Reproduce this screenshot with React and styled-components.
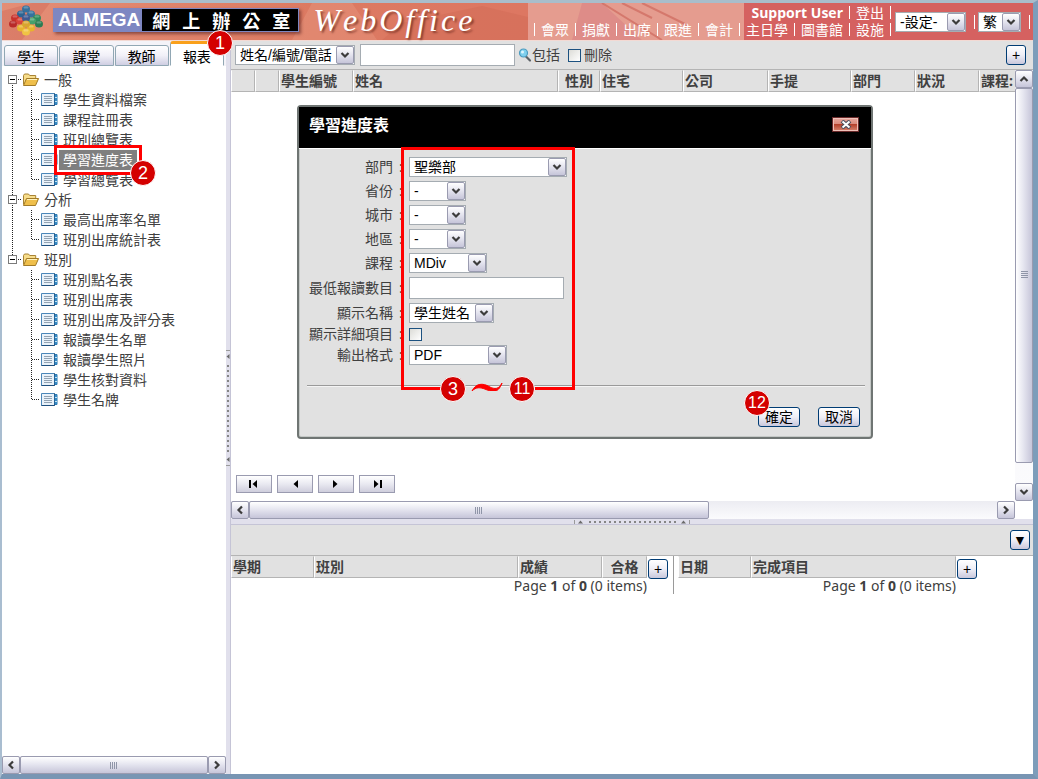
import React from "react"
import styled, { createGlobalStyle, css } from "styled-components"

const GlobalStyle = createGlobalStyle`
  * {
    box-sizing: border-box;
  }

  body {
    margin: 0;
    background: #fff;
    color: #404040;
    font-family: "Open Sans", "Noto Sans CJK TC", sans-serif;
    font-size: 14px;
    line-height: 20px;
  }

  button, select, input {
    font-family: "Liberation Sans", "Noto Sans CJK TC", sans-serif;
    font-size: 14px;
    color: #000;
  }

  ul {
    list-style: none;
    margin: 0;
    padding: 0;
  }
`

const Frame = styled.div`
  min-height: 100vh;
  display: flex;
  flex-direction: column;
  border-style: solid;
  border-width: 3px 5px 5px 2px;
  border-color: #a9bdcb #7d9dba #7895b3 #a9bdd0;
`

/* Shared controls */

const SelectShell = styled.span`
  display: inline-grid;
  width: ${p => p.$width}px;
  height: 20px;
  border: 1px solid #a5acb2;
  background: #fff;
`

const NativeSelect = styled.select`
  grid-area: 1 / 1;
  appearance: none;
  width: 100%;
  height: 18px;
  border: 0;
  background: transparent;
  padding: 0 18px 0 4px;
  line-height: 18px;
  outline: none;
`

const SelectArrow = styled.span`
  grid-area: 1 / 1;
  justify-self: end;
  display: grid;
  place-items: center;
  width: 18px;
  height: 18px;
  border: 1px solid #9a9bb0;
  border-radius: 2px;
  background: linear-gradient(#fff, #e6e6f0 45%, #c6c5d9);
  pointer-events: none;
`

const Chevron = ({ turn = 0 }) => (
  <svg width="10" height="10" viewBox="0 0 10 10" aria-hidden="true">
    <path
      d="M1.5 3 L5 6.5 L8.5 3"
      transform={`rotate(${turn} 5 5)`}
      fill="none"
      stroke="#3c3c3c"
      strokeWidth="2.2"
    />
  </svg>
)

const Select = ({ id, label, width, options }) => (
  <SelectShell $width={width}>
    <NativeSelect id={id} aria-label={label}>
      {options.map(option => (
        <option key={option}>{option}</option>
      ))}
    </NativeSelect>
    <SelectArrow>
      <Chevron />
    </SelectArrow>
  </SelectShell>
)

const TextInput = styled.input`
  width: 155px;
  height: 22px;
  border: 1px solid #a5acb2;
  background: #fff;
  padding: 0 4px;
`

const Checkbox = styled.input`
  appearance: none;
  width: 13px;
  height: 13px;
  margin: 0;
  border: 1px solid #1c5180;
  background: linear-gradient(135deg, #dcdcd7, #fff);
`

const XpButton = styled.button`
  flex: none;
  height: 20px;
  width: ${p => p.$width}px;
  padding: 0;
  border: 1px solid #003c74;
  border-radius: 3px;
  background: linear-gradient(#fff, #eeeef6 50%, #c9c8dc);
  line-height: 18px;
  text-align: center;
`

const Badge = styled.span`
  display: grid;
  place-items: center;
  width: 26px;
  height: 26px;
  border: 1px solid #fff;
  border-radius: 50%;
  background: #d40000;
  color: #fff;
  font-family: "Liberation Sans", sans-serif;
  font-size: ${p => (p.$wide ? 16 : 18)}px;
  line-height: 24px;
`

/* Header */

const Banner = styled.header`
  display: flex;
  align-items: center;
  height: 38px;
  position: relative;
  color: #fff;
  border-bottom: 1px solid #f3d9d3;
  background: linear-gradient(90deg, #e48e76, #dc7a62 30%, #dd7762 51%, #e59c8f 51%, #e59c8f 72%, #d56160 72%);
`

const BannerArt = styled.svg`
  position: absolute;
  inset: 0;
  width: 100%;
  height: 100%;
`

const Brand = styled.div`
  position: relative;
  display: flex;
  align-items: center;
  flex: 1;
  padding: 0 0 4px 6px;
`

const NamePlate = styled.div`
  display: flex;
  align-items: center;
  height: 24px;
  margin: 0 14px 0 9px;
  padding: 1px;
  background: #7e87c2;
  box-shadow: 2px 2px 3px rgba(80, 30, 30, 0.6);
  font-family: "Liberation Sans", sans-serif;
  font-size: 19px;
  font-weight: 700;
`

const PlateLatin = styled.span`
  padding: 0 2px 0 4px;
`

const PlateHan = styled.span`
  display: flex;
  gap: 12px;
  height: 22px;
  padding: 0 8px 0 10px;
  background: #000;
  font-family: "Noto Sans CJK TC", sans-serif;
  font-size: 18px;
  line-height: 22px;
`

const Wordmark = styled.span`
  display: flex;
  gap: 3px;
  font-family: "Liberation Serif", serif;
  font-size: 32px;
  font-style: italic;
  line-height: 34px;
  text-shadow: 2px 2px 2px rgba(90, 30, 20, 0.6);
`

const Menu = styled.nav`
  position: relative;
  display: flex;
  flex-direction: column;
  align-items: flex-end;
  padding-bottom: 2px;
`

const MenuRow = styled.div`
  display: flex;
  line-height: 17px;
`

const menuItem = css`
  display: flex;
  align-items: center;
  color: #fff;
  text-decoration: none;
  white-space: nowrap;

  &::after {
    content: "";
    width: 1px;
    height: 13px;
    margin: 0 6px;
    background: #fff;
  }

  &:last-child::after {
    margin-right: 4px;
  }
`

const MenuLink = styled.a`
  ${menuItem}

  ${p => p.$first && css`
    &::before {
      content: "";
      width: 1px;
      height: 13px;
      margin-right: 6px;
      background: #fff;
    }
  `}
`

const UserName = styled.strong`
  ${menuItem}
`

const Settings = styled.div`
  position: relative;
  display: flex;
  align-items: center;
`

const Divider = styled.span`
  width: 1px;
  height: 14px;
  margin: 0 3px 0 8px;
  background: #fff;
`

/* Sidebar */

const Body = styled.div`
  flex: 1;
  display: flex;
`

const Sidebar = styled.aside`
  flex: none;
  width: 224px;
  display: flex;
  flex-direction: column;
  background: #fff;
`

const Tabs = styled.div`
  display: flex;
  align-items: flex-end;
  gap: 1px;
  height: 25px;
  padding: 0 2px;
  background: #f4f3f8;
`

const Tab = styled.button`
  position: relative;
  flex: 1;
  height: ${p => (p.$active ? 25 : 21)}px;
  padding: 0;
  border: 1px solid #91a7b4;
  border-bottom-color: ${p => (p.$active ? "#fff" : "#91a7b4")};
  border-radius: 3px 3px 0 0;
  background: linear-gradient(#fff, #f1f0f8 50%, #cfcee2);
  line-height: 22px;

  ${p => p.$active && css`
    border-top: 3px solid #f9a01b;
    padding-top: 2px;
    background: #fff;
  `}
`

const TabBadge = styled(Badge)`
  position: absolute;
  top: -14px;
  right: -10px;
  z-index: 2;
`

const Tree = styled.ul`
  flex: 1;
  padding-top: 4px;
`

const TreeRow = styled.div`
  display: flex;
  align-items: center;
  height: 20px;
`

const TreeLabel = styled.a`
  position: relative;
  height: 20px;
  margin-left: ${p => (p.$group ? 0 : 1)}px;
  padding: 0 4px;
  color: #404040;
  line-height: 20px;
  text-decoration: none;

  ${p => p.$selected && css`
    background: #7f7f7f;
    color: #fff;
    outline: 3px solid #f00;
    outline-offset: 2px;
    z-index: 1;
  `}
`

const TreeBadge = styled(Badge)`
  position: absolute;
  left: 71px;
  top: 10px;
`

/* Scroll bars */

const Bar = styled.div`
  display: flex;
  flex-direction: ${p => (p.$vertical ? "column" : "row")};
  flex: none;
  ${p => (p.$vertical ? "width: 18px;" : "height: 18px;")}
  background: linear-gradient(#ececf2, #fbfbfd);
`

const ScrollButton = styled.button`
  display: grid;
  place-items: center;
  flex: none;
  width: 18px;
  height: 18px;
  padding: 0;
  border: 1px solid #9a9bb0;
  border-radius: 2px;
  background: linear-gradient(#fff, #e6e6f0 45%, #c6c5d9);
`

const Thumb = styled.div`
  display: grid;
  place-items: center;
  flex: ${p => p.$share} 1 0;
  border: 1px solid #9a9bb0;
  border-radius: 2px;
  background: linear-gradient(${p => (p.$vertical ? "90deg" : "180deg")}, #fff, #e6e6f0 45%, #c6c5d9);
`

const Track = styled.div`
  flex: ${p => p.$share} 1 0;
`

const Grip = ({ vertical }) => (
  <svg width="8" height="8" viewBox="0 0 8 8" aria-hidden="true">
    <path
      d={vertical ? "M1 .5h7M1 2.5h7M1 4.5h7M1 6.5h7" : "M.5 1v7M2.5 1v7M4.5 1v7M6.5 1v7"}
      stroke="#8f95a8"
    />
  </svg>
)

const ScrollBar = ({ vertical, thumb = 1, track = 0 }) => (
  <Bar $vertical={vertical}>
    <ScrollButton aria-label={vertical ? "向上捲動" : "向左捲動"}>
      <Chevron turn={vertical ? 180 : 90} />
    </ScrollButton>
    <Thumb $vertical={vertical} $share={thumb}>
      <Grip vertical={vertical} />
    </Thumb>
    {track > 0 && <Track $share={track} />}
    <ScrollButton aria-label={vertical ? "向下捲動" : "向右捲動"}>
      <Chevron turn={vertical ? 0 : 270} />
    </ScrollButton>
  </Bar>
)

const Splitter = styled.div`
  display: flex;
  align-items: center;
  justify-content: center;
  flex: none;
  overflow: hidden;
  background: #e1e0ec;
  border: 0 solid #c5c4d6;
  ${p => (p.$vertical ? "width: 5px; border-right-width: 1px;" : "height: 6px; border-bottom-width: 1px;")}
`

/* Main area */

const Main = styled.main`
  flex: 1;
  min-width: 0;
  display: flex;
  flex-direction: column;
`

const Toolbar = styled.div`
  display: flex;
  align-items: center;
  height: ${p => p.$height}px;
  padding: 0 ${p => p.$right}px 0 4px;
  background: #e1e1e1;
  border-bottom: 1px solid #b4b4b4;
`

const SearchInput = styled(TextInput)`
  margin: 0 3px 0 5px;
`

const CheckLabel = styled.label`
  display: flex;
  align-items: center;
  gap: 3px;
  margin-left: 8px;
`

const Push = styled.span`
  flex: 1;
`

const Pane = styled.div`
  display: flex;
`

const GridPane = styled.section`
  position: relative;
  flex: 1;
  min-width: 0;
  min-height: 431px;
  display: flex;
  flex-direction: column;
  justify-content: space-between;
`

const TableClip = styled.div`
  overflow: hidden;
`

const Table = styled.table`
  table-layout: fixed;
  width: ${p => p.$width}px;
  border-collapse: separate;
  border-spacing: 0;
`

const Th = styled.th`
  height: 22px;
  padding: 0 1px;
  border: 1px solid;
  border-color: #e1e1e1 #b4b4b4 #b4b4b4 #fff;
  background: #e1e1e1;
  font-weight: 700;
  line-height: 20px;
  text-align: ${p => p.$align || "left"};
  white-space: nowrap;
`

const Pager = styled.div`
  display: flex;
  gap: 5px;
  padding: 0 0 8px 5px;
`

const PagerButton = styled.button`
  display: grid;
  place-items: center;
  width: 36px;
  height: 18px;
  padding: 0;
  border: 1px solid #9a9bb0;
  background: linear-gradient(#fff, #e9e9f1 50%, #cfcedd);
`

const BarRow = styled.div`
  display: grid;
  grid-template-columns: 1fr 18px;
`

const Details = styled.section`
  display: flex;
  flex: 1;
  align-items: flex-start;
`

const DetailBlock = styled.div`
  display: flex;
  align-items: flex-start;
  gap: 1px;
  padding-right: 5px;
  margin-right: 4px;
  height: 38px;
  ${p => p.$ruled && "border-right: 1px solid #9a9a9a;"}
`

const AddButton = styled(XpButton)`
  margin-top: 3px;
`

const Summary = styled.p`
  margin: 0;
  font-size: 14px;
  font-family: "Noto Sans", sans-serif;
  line-height: 16px;
  text-align: right;
  white-space: nowrap;
`

/* Dialog */

const Dialog = styled.section`
  position: absolute;
  top: 35px;
  left: 66px;
  width: 576px;
  border: 2px solid #6f7573;
  border-radius: 4px;
  background: #e1e1e1;
  box-shadow: inset 0 0 0 1px #c4c8c6;
`

const DialogHead = styled.div`
  display: flex;
  align-items: center;
  justify-content: space-between;
  height: 42px;
  padding: 0 12px 6px 10px;
  border-bottom: 1px solid #fff;
  background: #000;
`

const DialogTitle = styled.h2`
  margin: 0;
  color: #fff;
  font-size: 16px;
  line-height: 24px;
`

const CloseButton = styled.button`
  display: grid;
  place-items: center;
  width: 27px;
  height: 15px;
  padding: 0;
  border: 1px solid #6a2a2a;
  background: linear-gradient(#e8a99f, #da8a7c 45%, #b5412c 50%, #d8846f);
  box-shadow: inset 0 0 0 1px #efc0b8;
`

const Fields = styled.div`
  position: relative;
  display: grid;
  grid-template-columns: 100px 1fr;
  column-gap: 10px;
  row-gap: 4px;
  align-items: center;
  padding: 8px 0 20px;
`

const FieldLabel = styled.label`
  display: flex;
  justify-content: flex-end;
  line-height: 14px;
  white-space: nowrap;

  &::after {
    content: ":";
    width: 0;
    padding-left: 6px;
  }
`

const FieldCell = styled.div`
  display: flex;
`

const Outline = styled.svg`
  position: absolute;
  left: 102px;
  top: -2px;
`

const Steps = styled.div`
  position: absolute;
  left: 141px;
  bottom: -17px;
  display: flex;
  gap: 43px;
`

const Rule = styled.hr`
  margin: 0 6px 0 8px;
  border: 0;
  border-top: 1px solid #9a9a9a;
  border-bottom: 1px solid #f4f4f4;
`

const DialogActions = styled.div`
  display: flex;
  justify-content: flex-end;
  gap: 18px;
  padding: 20px 11px 10px;
`

const Action = styled.span`
  position: relative;
  display: flex;
`

const ActionBadge = styled(Badge)`
  position: absolute;
  left: -14px;
  top: -17px;
`

/* Drawings */

const Logo = () => (
  <svg width="36" height="32" viewBox="0 0 36 32" aria-hidden="true">
    {[
      [18, 5, "#35719d"], [13, 10, "#2d6492"], [23, 10, "#35719d"],
      [7, 14, "#c8312c"], [12, 17, "#d7443a"], [5, 20, "#b82a28"],
      [29, 14, "#2f8a5b"], [24, 17, "#45a06c"], [31, 20, "#2a7c53"],
      [18, 14, "#3f5a92"], [13, 24, "#e8b32e"], [23, 24, "#e8b32e"],
      [18, 20, "#d9a52e"], [18, 28, "#f0c444"],
    ].map(([x, y, fill]) => (
      <g key={`${x}-${y}`}>
        <ellipse cx={x} cy={y} rx="4" ry="3.6" fill={fill} />
        <ellipse cx={x} cy={y - 1.6} rx="2.6" ry="1.2" fill="#fff" opacity="0.25" />
      </g>
    ))}
  </svg>
)

const Folder = () => (
  <svg width="18" height="16" viewBox="0 0 18 16" aria-hidden="true">
    <path d="M1.5 12.5V3.5l1-1.5h4l1.2 1.5h6v3" fill="#f7dd8b" stroke="#a88334" />
    <path d="M1.5 13.5L4.5 6.5H16.6L13.5 13.5Z" fill="#efbf4b" stroke="#a27b28" />
    <path d="M5 7.5h10" stroke="#fff2bd" />
  </svg>
)

const Report = () => (
  <svg width="17" height="16" viewBox="0 0 17 16" aria-hidden="true">
    <path d="M.5 1.5h13v12h-13z" fill="#e9f2fa" stroke="#4a86b8" />
    <path d="M.5 13.5h13v-12" fill="none" stroke="#1f4f7d" />
    <path d="M3 4.5h8M3 6.5h8M3 8.5h8M3 10.5h8" stroke="#93a3b3" />
    <path d="M14 2.5h2v10h-2z" fill="#3a9bd8" stroke="#2f78b0" />
    <path d="M14 5.5h2M14 9.5h2" stroke="#c2e2f5" />
  </svg>
)

const GroupLines = ({ first, last }) => (
  <svg width="20" height="20" viewBox="0 0 20 20" aria-hidden="true">
    <g stroke="#222" strokeDasharray="1 1">
      {!first && <path d="M10.5 0v5" />}
      {!last && <path d="M10.5 15v5" />}
      <path d="M16 9.5h4" />
    </g>
    <rect x="6.5" y="5.5" width="8" height="8" fill="#fff" stroke="#7b7b7b" />
    <path d="M8 9.5h5" stroke="#000" />
  </svg>
)

const LeafLines = ({ trunk, last }) => (
  <svg width="39" height="20" viewBox="0 0 39 20" aria-hidden="true">
    <g stroke="#222" strokeDasharray="1 1">
      {trunk && <path d="M10.5 0v20" />}
      <path d={last ? "M29.5 0v10" : "M29.5 0v20"} />
      <path d="M30 9.5h8" />
    </g>
  </svg>
)

const Magnifier = () => (
  <svg width="14" height="16" viewBox="0 0 14 16" aria-hidden="true">
    <path d="M8 9.5l4 4" stroke="#5d6267" strokeWidth="2.2" strokeLinecap="round" />
    <circle cx="5.5" cy="6" r="4" fill="#7fd0ee" stroke="#4d9cc0" strokeWidth="1.2" />
    <circle cx="4.5" cy="5" r="1.5" fill="#def5fd" />
  </svg>
)

const PagerIcon = ({ back, edge }) => (
  <svg width="12" height="10" viewBox="0 0 12 10" aria-hidden="true">
    <g transform={back ? undefined : "rotate(180 6 5)"}>
      <path d="M9 1v8L4.5 5z" fill="#000" />
      {edge && <path d="M2 1v8" stroke="#000" strokeWidth="2" />}
    </g>
  </svg>
)

const SideGrip = () => (
  <svg width="4" height="116" viewBox="0 0 4 116" aria-hidden="true">
    <path d="M0 .5h4M0 115.5h4" stroke="#9a9a9a" />
    <path d="M3.5 4v5L.5 6.5zM3.5 107v5l-3-2.5z" fill="#6b6b6b" />
    <path d="M2 15v88" stroke="#858585" strokeWidth="2" strokeDasharray="2 3" />
  </svg>
)

const BottomGrip = () => (
  <svg width="116" height="4" viewBox="0 0 116 4" aria-hidden="true">
    <path d="M.5 0v4M115.5 0v4" stroke="#9a9a9a" />
    <path d="M4 3.5h5L6.5 .5zM107 3.5h5l-2.5-3z" fill="#6b6b6b" />
    <path d="M15 2h88" stroke="#858585" strokeWidth="2" strokeDasharray="2 3" />
  </svg>
)

const groups = [
  { name: "一般", items: ["學生資料檔案", "課程註冊表", "班別總覽表", "學習進度表", "學習總覽表"] },
  { name: "分析", items: ["最高出席率名單", "班別出席統計表"] },
  {
    name: "班別",
    items: ["班別點名表", "班別出席表", "班別出席及評分表", "報讀學生名單", "報讀學生照片", "學生核對資料", "學生名牌"],
  },
]

const studentColumns = [
  ["", 24], ["", 24], ["學生編號", 74], ["姓名", 205], ["性別", 42, "center"], ["住宅", 83],
  ["公司", 85], ["手提", 83], ["部門", 64], ["狀況", 64], ["課程:", 84],
]

const termColumns = [["學期", 83], ["班別", 204], ["成績", 84], ["合格", 45, "center"]]
const progressColumns = [["日期", 73], ["完成項目", 205]]

const sum = columns => columns.reduce((total, column) => total + column[1], 0)

const HeaderTable = ({ columns }) => (
  <Table $width={sum(columns)}>
    <colgroup>
      {columns.map(([, width], i) => (
        <col key={i} width={width} />
      ))}
    </colgroup>
    <thead>
      <tr>
        {columns.map(([name, , align], i) => (
          <Th key={i} scope="col" $align={align}>{name}</Th>
        ))}
      </tr>
    </thead>
  </Table>
)

const Detail = ({ columns, ruled }) => (
  <DetailBlock $ruled={ruled}>
    <div>
      <HeaderTable columns={columns} />
      <Summary>
        Page <b>1</b> of <b>0</b> (0 items)
      </Summary>
    </div>
    <AddButton $width={20} aria-label="新增">+</AddButton>
  </DetailBlock>
)

const Field = ({ id, label, children }) => (
  <>
    <FieldLabel htmlFor={id}>{label}</FieldLabel>
    <FieldCell>{children}</FieldCell>
  </>
)

const ReportDialog = () => (
  <Dialog role="dialog" aria-labelledby="dialog-title">
    <DialogHead>
      <DialogTitle id="dialog-title">學習進度表</DialogTitle>
      <CloseButton aria-label="關閉">
        <svg width="12" height="9" viewBox="0 0 12 9" aria-hidden="true">
          <path d="M2 1L10 8M10 1L2 8" stroke="#4b4f5c" strokeWidth="4" />
          <path d="M2.5 1.5L9.5 7.5M9.5 1.5L2.5 7.5" stroke="#fff" strokeWidth="2" />
        </svg>
      </CloseButton>
    </DialogHead>
    <Fields>
      <Field id="department" label="部門">
        <Select id="department" width={158} options={["聖樂部"]} />
      </Field>
      <Field id="province" label="省份">
        <Select id="province" width={57} options={["-"]} />
      </Field>
      <Field id="city" label="城市">
        <Select id="city" width={57} options={["-"]} />
      </Field>
      <Field id="district" label="地區">
        <Select id="district" width={57} options={["-"]} />
      </Field>
      <Field id="course" label="課程">
        <Select id="course" width={78} options={["MDiv"]} />
      </Field>
      <Field id="minimum" label="最低報讀數目">
        <TextInput id="minimum" type="text" />
      </Field>
      <Field id="display-name" label="顯示名稱">
        <Select id="display-name" width={85} options={["學生姓名"]} />
      </Field>
      <Field id="show-details" label="顯示詳細項目">
        <Checkbox id="show-details" type="checkbox" />
      </Field>
      <Field id="format" label="輸出格式">
        <Select id="format" width={98} options={["PDF"]} />
      </Field>
      <Outline width="174" height="244" viewBox="0 0 174 244" aria-hidden="true">
        <path d="M42 241.5H1.5V1.5H172.5V241.5H134" fill="none" stroke="#f00" strokeWidth="3" />
        <path d="M71 244C75 236 82 236 88 239.5S98 242 101 236C97 247 91 245 85 242.5S75 240 71 244Z" fill="#f00" stroke="#f00" />
      </Outline>
      <Steps>
        <Badge>3</Badge>
        <Badge $wide>11</Badge>
      </Steps>
    </Fields>
    <Rule />
    <DialogActions>
      <Action>
        <XpButton $width={42}>確定</XpButton>
        <ActionBadge $wide>12</ActionBadge>
      </Action>
      <XpButton $width={42}>取消</XpButton>
    </DialogActions>
  </Dialog>
)

const Letters = ({ text }) => [...text].map((letter, i) => <span key={i}>{letter}</span>)

const App = () => (
  <Frame>
    <GlobalStyle />
    <Banner>
      <BannerArt viewBox="0 0 1031 37" preserveAspectRatio="xMinYMid slice" aria-hidden="true">
        <path d="M0 8L30 0H48L20 37H0z" fill="#c85a4d" opacity="0.3" />
        <path d="M400 20L480 3L526 14V37H380z" fill="#c95f4d" opacity="0.25" />
        <path d="M310 0H350L375 37H290z" fill="#f0a58f" opacity="0.3" />
        <path d="M580 0L600 0L640 37H570z" fill="#d47a80" opacity="0.45" />
        <path d="M640 0L685 22M600 0L660 37M620 0L650 15" stroke="#cb6156" strokeWidth="2" opacity="0.6" />
      </BannerArt>
      <Brand>
        <Logo />
        <NamePlate>
          <PlateLatin>ALMEGA</PlateLatin>
          <PlateHan>
            <Letters text="網上辦公室" />
          </PlateHan>
        </NamePlate>
        <Wordmark>
          <Letters text="WebOffice" />
        </Wordmark>
      </Brand>
      <Menu>
        <MenuRow>
          <UserName>Support User</UserName>
          <MenuLink href="#logout">登出</MenuLink>
        </MenuRow>
        <MenuRow>
          {["會眾", "捐獻", "出席", "跟進", "會計", "主日學", "圖書館", "設施"].map((name, i) => (
            <MenuLink key={name} href="#" $first={i === 0}>{name}</MenuLink>
          ))}
        </MenuRow>
      </Menu>
      <Settings>
        <Select label="設定" width={71} options={["-設定-"]} />
        <Divider />
        <Select label="語言" width={43} options={["繁"]} />
        <Divider />
      </Settings>
    </Banner>
    <Body>
      <Sidebar>
        <Tabs>
          <Tab>學生</Tab>
          <Tab>課堂</Tab>
          <Tab>教師</Tab>
          <Tab $active>
            報表
            <TabBadge>1</TabBadge>
          </Tab>
        </Tabs>
        <Tree>
          {groups.map((group, g) => (
            <li key={group.name}>
              <TreeRow>
                <GroupLines first={g === 0} last={g === groups.length - 1} />
                <Folder />
                <TreeLabel href="#" $group>{group.name}</TreeLabel>
              </TreeRow>
              <ul>
                {group.items.map((item, i) => (
                  <li key={item}>
                    <TreeRow>
                      <LeafLines trunk={g < groups.length - 1} last={i === group.items.length - 1} />
                      <Report />
                      <TreeLabel href="#" $selected={item === "學習進度表"}>
                        {item}
                        {item === "學習進度表" && <TreeBadge>2</TreeBadge>}
                      </TreeLabel>
                    </TreeRow>
                  </li>
                ))}
              </ul>
            </li>
          ))}
        </Tree>
        <ScrollBar />
      </Sidebar>
      <Splitter $vertical>
        <SideGrip />
      </Splitter>
      <Main>
        <Toolbar $height={29} $right={7}>
          <Select label="搜尋欄位" width={120} options={["姓名/編號/電話"]} />
          <SearchInput type="text" aria-label="搜尋" />
          <Magnifier />
          <span>包括</span>
          <CheckLabel>
            <Checkbox type="checkbox" />
            刪除
          </CheckLabel>
          <Push />
          <XpButton $width={20} aria-label="新增">+</XpButton>
        </Toolbar>
        <Pane>
          <GridPane>
            <TableClip>
              <HeaderTable columns={studentColumns} />
            </TableClip>
            <Pager>
              <PagerButton aria-label="第一頁"><PagerIcon back edge /></PagerButton>
              <PagerButton aria-label="上一頁"><PagerIcon back /></PagerButton>
              <PagerButton aria-label="下一頁"><PagerIcon /></PagerButton>
              <PagerButton aria-label="最後一頁"><PagerIcon edge /></PagerButton>
            </Pager>
            <ReportDialog />
          </GridPane>
          <ScrollBar vertical thumb={372} track={20} />
        </Pane>
        <BarRow>
          <ScrollBar thumb={458} track={288} />
        </BarRow>
        <Splitter>
          <BottomGrip />
        </Splitter>
        <Toolbar $height={31} $right={3}>
          <Push />
          <XpButton $width={20} aria-label="收合">▼</XpButton>
        </Toolbar>
        <Details>
          <Detail columns={termColumns} ruled />
          <Detail columns={progressColumns} />
        </Details>
      </Main>
    </Body>
  </Frame>
)

export default App
